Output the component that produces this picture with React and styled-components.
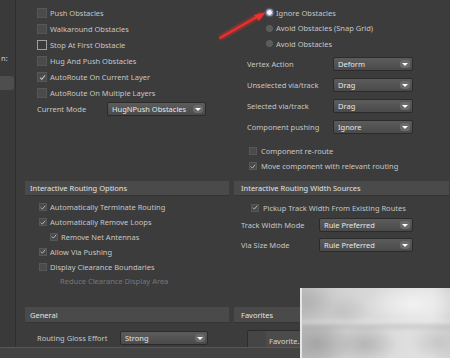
import React from "react";
import styled, { createGlobalStyle } from "styled-components";

const GlobalStyle = createGlobalStyle`
  html, body { margin: 0; padding: 0; background: #3c3c3c; }
  #root { width: 450px; height: 358px; }
`;

const Screen = styled.div`
  position: relative;
  width: 450px;
  height: 358px;
  overflow: hidden;
  background: #3c3c3c;
  display: flex;
  flex-direction: column;
  font-family: "Noto Sans", "Open Sans", sans-serif;
  font-size: 7.5px;
  color: #c6c6c6;
`;

const Body = styled.div`
  flex: 1;
  display: flex;
  min-height: 0;
`;

const SideStrip = styled.div`
  width: 15px;
  border-right: 1px solid #2e2e2e;
  background: #3a3a3a;
  display: flex;
  flex-direction: column;
  padding-top: 53px;
  gap: 13px;
`;

const SideLabel = styled.div`
  white-space: nowrap;
  color: #d0d0d0;
  line-height: 10px;
  padding-left: 1px;
`;

const SideButton = styled.div`
  width: 14px;
  height: 14px;
  background: #4e4e4e;
  border-radius: 0 3px 3px 0;
`;

const Main = styled.div`
  flex: 1;
  display: grid;
  grid-template-columns: 204px 215px;
  grid-template-rows: 181px 15px 111px 16px 1fr;
  column-gap: 5px;
  padding-left: 9px;
`;

const Column = styled.div`
  display: flex;
  flex-direction: column;
  padding-top: ${(p) => p.$top || 0}px;
  padding-left: ${(p) => p.$left || 0}px;
`;

const SectionHeader = styled.div`
  background: #4a4a4a;
  border-bottom: 1px solid #353535;
  color: #e2e2e2;
  padding-left: ${(p) => p.$pad || 5}px;
  display: flex;
  align-items: center;
  white-space: nowrap;
  overflow: hidden;
  width: ${(p) => (p.$w ? `${p.$w}px` : "auto")};
`;

const Row = styled.div`
  height: ${(p) => p.$h || 16}px;
  margin-top: ${(p) => p.$mt || 0}px;
  padding-left: ${(p) => p.$indent || 0}px;
  display: flex;
  align-items: center;
  white-space: nowrap;
  color: ${(p) => (p.$disabled ? "#777777" : "#c6c6c6")};
`;

const Box = styled.span`
  box-sizing: border-box;
  width: ${(p) => p.$size || 9}px;
  height: ${(p) => p.$size || 9}px;
  margin-right: ${(p) => p.$gap || 3}px;
  background: ${(p) => (p.$focus ? "#3a3a3a" : "#4a4a4a")};
  border: 1px solid ${(p) => (p.$focus ? "#a0a0a0" : "#575757")};
  display: inline-flex;
  align-items: center;
  justify-content: center;
  flex-shrink: 0;
`;

const Radio = styled.span`
  box-sizing: border-box;
  width: 7px;
  height: 7px;
  border-radius: 50%;
  margin-right: 3px;
  background: ${(p) => (p.$on ? "#f4f4ff" : "#5a5a5a")};
  border: 1px solid ${(p) => (p.$on ? "#8a8ab0" : "#666")};
  box-shadow: ${(p) => (p.$on ? "0 0 2px #c8c8ff" : "none")};
  flex-shrink: 0;
`;

const Label = styled.span`
  width: ${(p) => p.$w}px;
  flex-shrink: 0;
`;

const Select = styled.div`
  box-sizing: border-box;
  width: ${(p) => p.$w}px;
  height: 14px;
  background: linear-gradient(#5c5c5c, #4a4a4a);
  border: 1px solid #2b2b2b;
  border-radius: 2px;
  color: #e6e6e6;
  padding-left: 4px;
  display: flex;
  align-items: center;
  justify-content: space-between;
`;

const Arrow = styled.span`
  width: 10px;
  height: 8px;
  margin-right: 2px;
  border-radius: 3px;
  background: #6a6a6a;
  display: flex;
  align-items: center;
  justify-content: center;
  &::after {
    content: "";
    border-left: 3px solid transparent;
    border-right: 3px solid transparent;
    border-top: 3px solid #ffffff;
  }
`;

const Footer = styled.div`
  height: 10px;
  border-top: 1px solid #575757;
  background: #434343;
`;

const FavButton = styled.div`
  box-sizing: border-box;
  width: 70px;
  height: 21px;
  margin-left: 13px;
  margin-top: 7px;
  background: linear-gradient(90deg, #454545 0 18px, #4b4b4b 18px);
  border: 1px solid #2c2c2c;
  border-radius: 2px;
  padding-left: 21px;
  display: flex;
  align-items: center;
  color: #d6d6d6;
`;

const Photo = styled.div`
  position: absolute;
  left: 300px;
  top: 288px;
  width: 150px;
  height: 70px;
  overflow: hidden;
  background: #cfcfcf;
  &::before {
    content: "";
    position: absolute;
    inset: -6px;
    filter: blur(2px);
    background:
      linear-gradient(180deg, transparent 0 38px, rgba(250,250,250,0.55) 40px, rgba(140,140,140,0.35) 44px, transparent 48px),
      radial-gradient(ellipse 36px 26px at 22px 62px, #a4a4a4, transparent),
      radial-gradient(ellipse 28px 20px at 12px 20px, #b2b2b2, transparent),
      radial-gradient(ellipse 34px 20px at 70px 62px, #b4b4b4, transparent),
      radial-gradient(ellipse 26px 18px at 48px 30px, #c2c2c2, transparent),
      radial-gradient(ellipse 50px 22px at 120px 22px, #f2f2f2, transparent),
      radial-gradient(ellipse 30px 20px at 145px 60px, #c6c6c6, transparent),
      linear-gradient(90deg, #bcbcbc, #d2d2d2 30%, #dcdcdc 60%, #e2e2e2 85%, #cfcfcf);
  }
`;

const PhotoEdge = styled.div`
  position: absolute;
  left: 300px;
  top: 288px;
  width: 2px;
  height: 70px;
  background: #e6e6e6;
`;

const ArrowSvg = styled.svg`
  position: absolute;
  left: 214px;
  top: 6px;
  overflow: visible;
`;

const Check = () => (
  <svg width="7" height="7" viewBox="0 0 7 7">
    <path d="M1 3.6 L2.8 5.4 L6 1.4" fill="none" stroke="#bdbdbd" strokeWidth="1.1" />
  </svg>
);

const CB = ({ checked, focus, size, gap }) => (
  <Box $focus={focus} $size={size} $gap={gap}>{checked ? <Check /> : null}</Box>
);

export default function App() {
  return (
    <>
      <GlobalStyle />
      <Screen>
        <Body>
          <SideStrip>
            <SideLabel>n:</SideLabel>
            <SideButton />
          </SideStrip>
          <Main>
            <Column $top={5} $left={12}>
              <Row><CB size={10} />Push Obstacles</Row>
              <Row><CB size={10} />Walkaround Obstacles</Row>
              <Row><CB size={10} focus />Stop At First Obstacle</Row>
              <Row><CB size={10} />Hug And Push Obstacles</Row>
              <Row><CB size={10} checked />AutoRoute On Current Layer</Row>
              <Row><CB size={10} />AutoRoute On Multiple Layers</Row>
              <Row>
                <Label $w={70}>Current Mode</Label>
                <Select $w={99}>HugNPush Obstacles<Arrow /></Select>
              </Row>
            </Column>
            <Column $top={5}>
              <Row $h={15.5} $indent={32}><Radio $on />Ignore Obstacles</Row>
              <Row $h={15.5} $indent={32}><Radio />Avoid Obstacles (Snap Grid)</Row>
              <Row $h={15.5} $indent={32}><Radio />Avoid Obstacles</Row>
              <Row $h={21} $mt={2} $indent={13}>
                <Label $w={86}>Vertex Action</Label>
                <Select $w={80}>Deform<Arrow /></Select>
              </Row>
              <Row $h={21} $indent={13}>
                <Label $w={86}>Unselected via/track</Label>
                <Select $w={80}>Drag<Arrow /></Select>
              </Row>
              <Row $h={21} $indent={13}>
                <Label $w={86}>Selected via/track</Label>
                <Select $w={80}>Drag<Arrow /></Select>
              </Row>
              <Row $h={21} $indent={13}>
                <Label $w={86}>Component pushing</Label>
                <Select $w={80}>Ignore<Arrow /></Select>
              </Row>
              <Row $h={15} $mt={6} $indent={15}><CB size={8} gap={4} />Component re-route</Row>
              <Row $h={15} $indent={15}><CB size={8} gap={4} checked />Move component with relevant routing</Row>
            </Column>

            <SectionHeader>Interactive Routing Options</SectionHeader>
            <SectionHeader $pad={7}>Interactive Routing Width Sources</SectionHeader>

            <Column $top={4} $left={14}>
              <Row $h={14.8}><CB size={8} checked />Automatically Terminate Routing</Row>
              <Row $h={14.8}><CB size={8} checked />Automatically Remove Loops</Row>
              <Row $h={14.8} $indent={11}><CB size={8} checked />Remove Net Antennas</Row>
              <Row $h={14.8}><CB size={8} checked />Allow Via Pushing</Row>
              <Row $h={14.8}><CB size={8} />Display Clearance Boundaries</Row>
              <Row $h={14.8} $indent={21} $disabled>Reduce Clearance Display Area</Row>
            </Column>
            <Column $top={4}>
              <Row $h={15} $indent={17}><CB size={8} gap={4} checked />Pickup Track Width From Existing Routes</Row>
              <Row $h={20} $indent={7}>
                <Label $w={78}>Track Width Mode</Label>
                <Select $w={94}>Rule Preferred<Arrow /></Select>
              </Row>
              <Row $h={20} $indent={7}>
                <Label $w={78}>Via Size Mode</Label>
                <Select $w={94}>Rule Preferred<Arrow /></Select>
              </Row>
            </Column>

            <SectionHeader>General</SectionHeader>
            <SectionHeader $pad={7} $w={70}>Favorites</SectionHeader>

            <Column $top={7} $left={12}>
              <Row>
                <Label $w={83}>Routing Gloss Effort</Label>
                <Select $w={88}>Strong<Arrow /></Select>
              </Row>
            </Column>
            <Column>
              <FavButton>Favorite...</FavButton>
            </Column>
          </Main>
        </Body>
        <Footer />
        <Photo />
        <PhotoEdge />
        <ArrowSvg width="60" height="40" viewBox="0 0 60 40">
          <defs>
            <filter id="glow" x="-50%" y="-50%" width="200%" height="200%">
              <feGaussianBlur stdDeviation="1.6" />
            </filter>
          </defs>
          <g filter="url(#glow)" opacity="0.7">
            <line x1="6" y1="32" x2="48" y2="8" stroke="#ff2a2a" strokeWidth="4" />
          </g>
          <line x1="6" y1="32" x2="46" y2="9" stroke="#f0302a" strokeWidth="2" strokeLinecap="round" />
          <path d="M52 6 L40 9 L45 15 Z" fill="#f0302a" />
        </ArrowSvg>
      </Screen>
    </>
  );
}
